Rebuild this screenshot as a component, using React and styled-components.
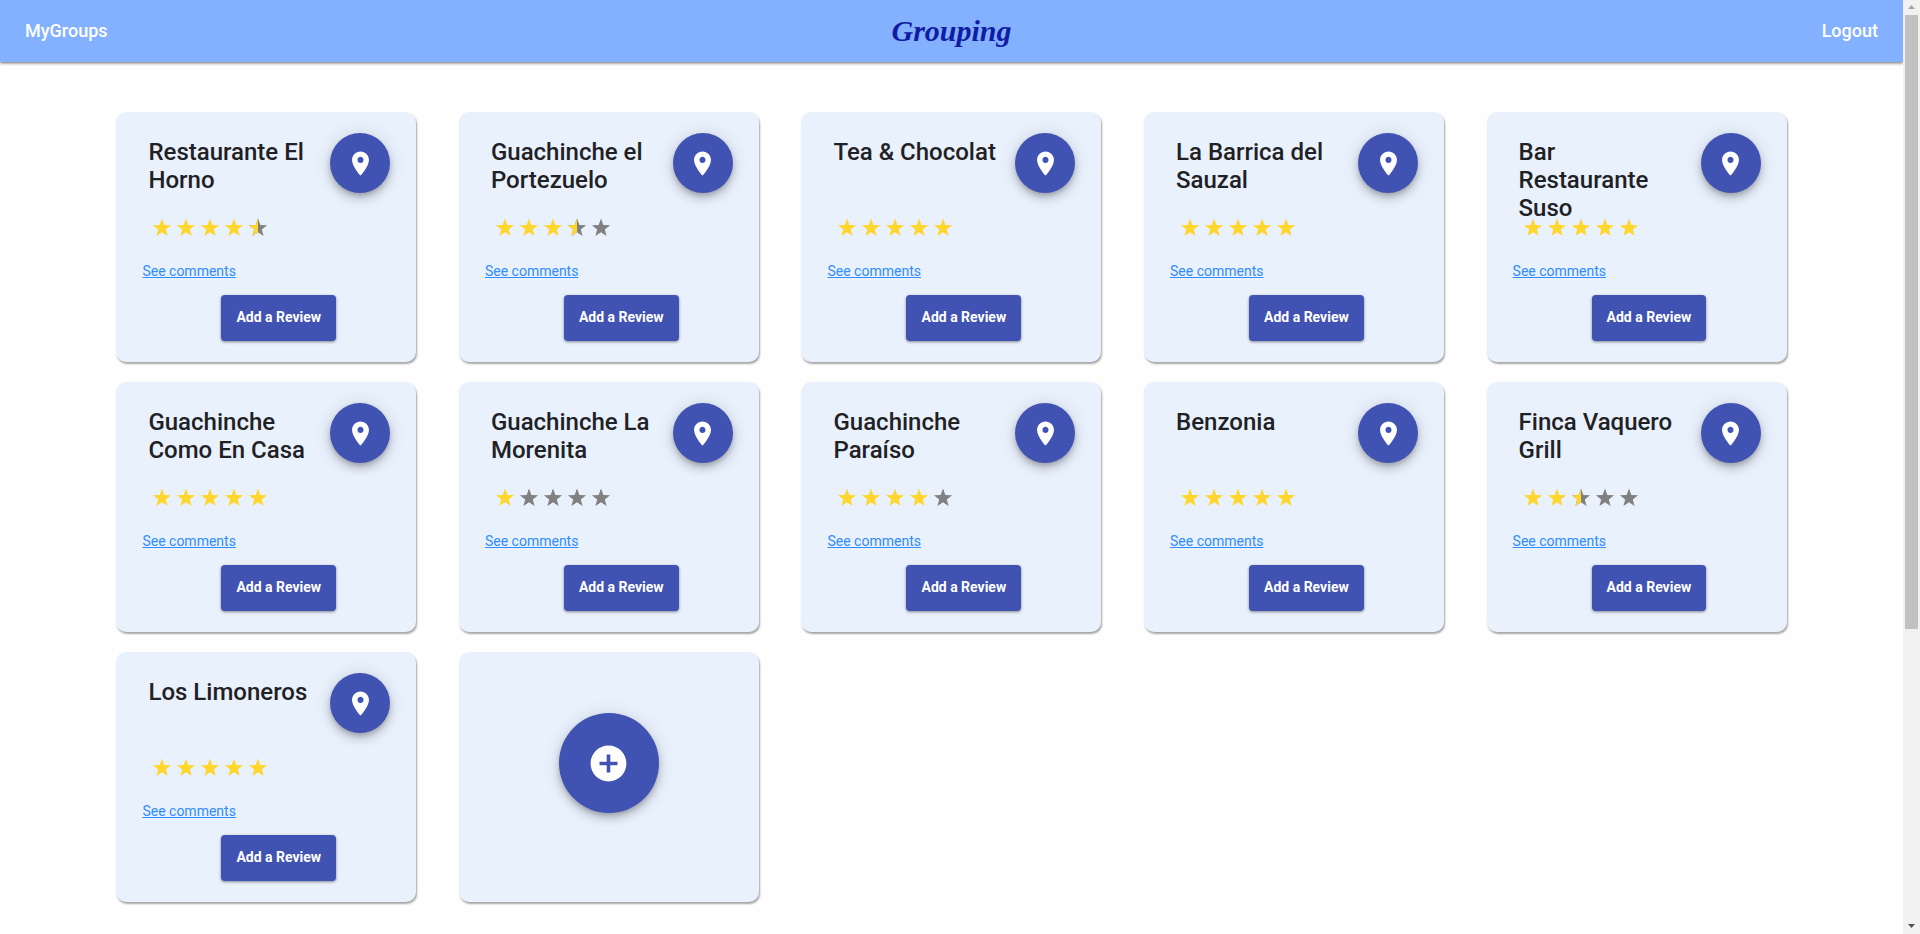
import React from "react";
import styled, { createGlobalStyle } from "styled-components";

const GlobalStyle = createGlobalStyle`
  *, *::before, *::after { box-sizing: border-box; }
  body {
    margin: 0;
    background: #fefefe;
    color: #1f2124;
    font-family: Roboto, "Liberation Sans", sans-serif;
  }
`;

const Page = styled.div`
  display: flex;
  align-items: flex-start;
  min-height: 100vh;
`;

const Content = styled.div`
  flex: 1;
  min-width: 0;
`;

const Header = styled.header`
  display: grid;
  grid-template-columns: 1fr auto 1fr;
  align-items: center;
  height: 62px;
  padding: 0 25px;
  background: #83b1ff;
  box-shadow: 0 1px 3px rgba(0, 0, 0, 0.6);
`;

const NavLink = styled.a`
  justify-self: ${({ $end }) => ($end ? "end" : "start")};
  color: #fff;
  font-size: 18px;
  font-weight: 500;
  line-height: 24px;
  text-decoration: none;
`;

const Logo = styled.a`
  color: #0f1ca3;
  font-family: "Liberation Serif", cursive;
  font-size: 30px;
  font-style: italic;
  font-weight: 700;
  line-height: 40px;
  text-decoration: none;
`;

const Grid = styled.main`
  display: grid;
  grid-template-columns: repeat(5, 1fr);
  justify-items: center;
  row-gap: 20px;
  width: 90%;
  margin: 0 auto;
  padding: 50px 0 32px;
`;

const Card = styled.article`
  display: flex;
  flex-direction: column;
  align-items: flex-start;
  width: 300px;
  padding: 21px 26px;
  border-radius: 10px;
  background: #e9f1fd;
  box-shadow: 1px 2px 2px rgba(0, 0, 0, 0.35);
`;

const AddCard = styled(Card)`
  align-items: center;
  padding-top: 61px;
`;

const CardTop = styled.div`
  display: flex;
  justify-content: space-between;
  align-self: stretch;
  height: 60px;
`;

const Title = styled.h2`
  width: 172px;
  margin: 0;
  padding: 5px 0 0 6px;
  font-size: 24px;
  font-weight: 500;
  line-height: 28px;
`;

const RoundButton = styled.button`
  display: flex;
  flex: none;
  align-items: center;
  justify-content: center;
  width: ${({ $size }) => $size}px;
  height: ${({ $size }) => $size}px;
  padding: 0;
  border: 0;
  border-radius: 50%;
  background: #4052b2;
  color: #fff;
  cursor: pointer;
  box-shadow: 0 3px 5px -1px rgba(0, 0, 0, 0.2), 0 6px 10px 0 rgba(0, 0, 0, 0.14),
    0 1px 18px 0 rgba(0, 0, 0, 0.12);
`;

const Icon = styled.svg`
  width: ${({ $size }) => $size}px;
  height: ${({ $size }) => $size}px;
  fill: currentColor;
`;

const Stars = styled.div`
  display: flex;
  margin: 23px 0 0 8px;
`;

const CommentsLink = styled.a`
  margin-top: 22px;
  color: #2f8dff;
  font-size: 14px;
  line-height: 18px;
`;

const ReviewButton = styled.button`
  height: 46px;
  margin: 15px 0 0 79px;
  padding: 0 15px 2px;
  border: 0;
  border-radius: 4px;
  background: #4052b2;
  color: #fff;
  font-family: inherit;
  font-size: 14px;
  font-weight: 700;
  cursor: pointer;
  box-shadow: 0 1px 3px rgba(0, 0, 0, 0.45);
`;

const ScrollTrack = styled.div`
  position: sticky;
  top: 0;
  display: flex;
  flex: none;
  flex-direction: column;
  align-items: center;
  justify-content: space-between;
  width: 17px;
  height: 100vh;
  padding: 5px 0 6px;
  background: #f1f1f1;
`;

const ScrollArrow = styled.svg`
  width: 7px;
  height: 4px;
  fill: ${({ $color }) => $color};
`;

const ScrollRail = styled.div`
  flex: 1;
  width: 13px;
  margin: 6px 0 11px;
`;

const ScrollThumb = styled.div`
  height: 68.4%;
  background: #c1c1c1;
`;

const STAR_POINTS =
  "12,2.6 14.35,8.96 21.1,9.2 15.8,13.4 17.6,20 12,16.2 6.4,20 8.2,13.4 2.9,9.2 9.65,8.96";
const HALF_STAR_POINTS = "12,2.6 12,16.2 6.4,20 8.2,13.4 2.9,9.2 9.65,8.96";

function Star({ fill }) {
  return (
    <Icon $size={24} viewBox="0 0 24 24" aria-hidden="true">
      <polygon points={STAR_POINTS} fill={fill === 1 ? "#ffd62e" : "#808080"} />
      {fill === 0.5 && <polygon points={HALF_STAR_POINTS} fill="#ffd62e" />}
    </Icon>
  );
}

function Rating({ value }) {
  return (
    <Stars role="img" aria-label={`${value} out of 5 stars`}>
      {[0, 1, 2, 3, 4].map((i) => (
        <Star key={i} fill={Math.max(0, Math.min(1, value - i))} />
      ))}
    </Stars>
  );
}

function PlaceCard({ name, rating }) {
  return (
    <Card>
      <CardTop>
        <Title>{name}</Title>
        <RoundButton type="button" $size={60} aria-label={`Location of ${name}`}>
          <Icon $size={29} viewBox="0 0 24 24" aria-hidden="true">
            <path d="M12 2C8.13 2 5 5.13 5 9c0 5.25 7 13 7 13s7-7.75 7-13c0-3.87-3.13-7-7-7zm0 9.5c-1.38 0-2.5-1.12-2.5-2.5s1.12-2.5 2.5-2.5 2.5 1.12 2.5 2.5-1.12 2.5-2.5 2.5z" />
          </Icon>
        </RoundButton>
      </CardTop>
      <Rating value={rating} />
      <CommentsLink href="#comments">See comments</CommentsLink>
      <ReviewButton type="button">Add a Review</ReviewButton>
    </Card>
  );
}

const places = [
  { name: "Restaurante El Horno", rating: 4.5 },
  { name: "Guachinche el Portezuelo", rating: 3.5 },
  { name: "Tea & Chocolat", rating: 5 },
  { name: "La Barrica del Sauzal", rating: 5 },
  { name: "Bar Restaurante Suso", rating: 5 },
  { name: "Guachinche Como En Casa", rating: 5 },
  { name: "Guachinche La Morenita", rating: 1 },
  { name: "Guachinche Paraíso", rating: 4 },
  { name: "Benzonia", rating: 5 },
  { name: "Finca Vaquero Grill", rating: 2.5 },
  { name: "Los Limoneros", rating: 5 },
];

export default function App() {
  return (
    <>
      <GlobalStyle />
      <Page>
        <Content>
          <Header>
            <NavLink href="#groups">MyGroups</NavLink>
            <Logo href="#home">Grouping</Logo>
            <NavLink href="#logout" $end>
              Logout
            </NavLink>
          </Header>
          <Grid>
            {places.map((place) => (
              <PlaceCard key={place.name} {...place} />
            ))}
            <AddCard>
              <RoundButton type="button" $size={100} aria-label="Add a place">
                <Icon $size={43} viewBox="0 0 24 24" aria-hidden="true">
                  <path d="M12 2C6.48 2 2 6.48 2 12s4.48 10 10 10 10-4.48 10-10S17.52 2 12 2zm5 11h-4v4h-2v-4H7v-2h4V7h2v4h4v2z" />
                </Icon>
              </RoundButton>
            </AddCard>
          </Grid>
        </Content>
        <ScrollTrack aria-hidden="true">
          <ScrollArrow $color="#a3a3a3" viewBox="0 0 7 4">
            <path d="M0 4L3.5 0 7 4z" />
          </ScrollArrow>
          <ScrollRail>
            <ScrollThumb />
          </ScrollRail>
          <ScrollArrow $color="#505050" viewBox="0 0 7 4">
            <path d="M0 0L3.5 4 7 0z" />
          </ScrollArrow>
        </ScrollTrack>
      </Page>
    </>
  );
}
